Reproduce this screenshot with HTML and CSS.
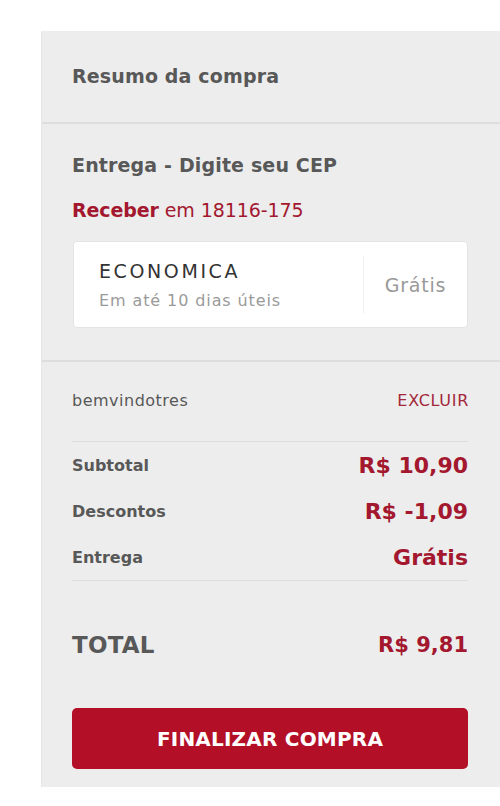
FILE: index.html
```html
<!DOCTYPE html>
<html lang="pt-BR">
<head>
<meta charset="utf-8">
<link rel="stylesheet" href="styles.css">
</head>
<body>
<div class="page">
  <aside class="summary">
    <div class="sec head">
      <h2 class="title">Resumo da compra</h2>
    </div>
    <div class="sec delivery">
      <h3 class="title">Entrega - Digite seu CEP</h3>
      <p class="receive"><b>Receber</b> em 18116-175</p>
      <div class="ship-card">
        <div class="ship-info">
          <div class="ship-name">ECONOMICA</div>
          <div class="ship-time">Em até 10 dias úteis</div>
        </div>
        <div class="ship-price">Grátis</div>
      </div>
    </div>
    <div class="sec totals">
      <div class="coupon">
        <span class="coupon-code">bemvindotres</span>
        <a class="coupon-remove">EXCLUIR</a>
      </div>
      <div class="lines">
        <div class="line"><span class="lbl">Subtotal</span><span class="val">R$ 10,90</span></div>
        <div class="line"><span class="lbl">Descontos</span><span class="val">R$ -1,09</span></div>
        <div class="line"><span class="lbl">Entrega</span><span class="val">Grátis</span></div>
      </div>
      <div class="total">
        <span class="total-lbl">TOTAL</span><span class="total-val">R$ 9,81</span>
      </div>
      <button class="btn">FINALIZAR COMPRA</button>
    </div>
  </aside>
</div>
</body>
</html>
```
FILE: styles.css
```css
* { box-sizing: border-box; }
html, body { margin: 0; padding: 0; background: #fff; }
body {
  font-family: "DejaVu Sans", "Liberation Sans", sans-serif;
  color: #585858;
  overflow: hidden;
}
.page {
  padding: 31px 0 0 41px;
}
.summary {
  background: #ededed;
  border-left: 1px solid #e6e6e6;
  width: 459px;
  padding-bottom: 18px;
}
.sec { padding: 0 32px 0 30px; }
.head {
  height: 93px;
  display: flex;
  align-items: center;
  padding-bottom: 1px;
  border-bottom: 2px solid #dedede;
}
.title {
  margin: 0;
  font-size: 19px;
  line-height: 24px;
  font-weight: 700;
  color: #585858;
  letter-spacing: 0.15px;
}
.delivery {
  padding-top: 29px;
  padding-bottom: 32px;
  border-bottom: 2px solid #dedede;
}
.receive {
  margin: 21px 0 0;
  font-size: 19px;
  line-height: 24px;
  color: #a3182f;
  letter-spacing: -0.1px;
}
.receive b { font-weight: 700; }
.ship-card {
  margin-top: 19px;
  margin-left: 1px;
  background: #fff;
  border: 1px solid #e4e4e4;
  border-radius: 4px;
  height: 87px;
  display: flex;
  align-items: stretch;
}
.ship-info {
  flex: 1;
  padding: 17px 0 0 25px;
}
.ship-name {
  font-size: 19px;
  line-height: 24px;
  color: #333;
  letter-spacing: 2.6px;
}
.ship-time {
  margin-top: 8px;
  font-size: 16px;
  line-height: 20px;
  color: #9a9a9a;
  letter-spacing: 0.9px;
}
.ship-price {
  width: 104px;
  border-left: 1px solid #efefef;
  margin: 14px 0;
  display: flex;
  align-items: center;
  justify-content: center;
  font-size: 19px;
  color: #999;
  letter-spacing: 0.8px;
}
.totals { padding-top: 28px; }
.coupon {
  display: flex;
  justify-content: space-between;
  align-items: center;
  height: 20px;
  box-sizing: content-box;
  padding-bottom: 31px;
  border-bottom: 1px solid #dcdcdc;
}
.coupon-code { color: #585858; font-size: 16px; letter-spacing: 0.5px; }
.coupon-remove { color: #a3283b; font-size: 16px; letter-spacing: 0.7px; margin-right: -1px; }
.lines {
  border-bottom: 1px solid #dcdcdc;
}
.line {
  display: flex;
  justify-content: space-between;
  align-items: center;
  height: 46px;
}
.lbl { font-size: 16px; font-weight: 700; color: #585858; }
.val { font-size: 22px; font-weight: 700; color: #a3182f; }
.total {
  display: flex;
  justify-content: space-between;
  align-items: center;
  margin-top: 49px;
  height: 30px;
}
.total-lbl { font-size: 23px; font-weight: 700; color: #585858; letter-spacing: 0.2px; }
.total-val { font-size: 21px; font-weight: 700; color: #a3182f; }
.btn {
  display: flex;
  align-items: center;
  justify-content: center;
  width: 100%;
  margin-top: 48px;
  height: 61px;
  border: 0;
  border-radius: 5px;
  background: #b30f27;
  color: #fff;
  font-family: inherit;
  font-size: 20px;
  font-weight: 700;
  letter-spacing: 0.2px;
  padding: 0;
}
```
